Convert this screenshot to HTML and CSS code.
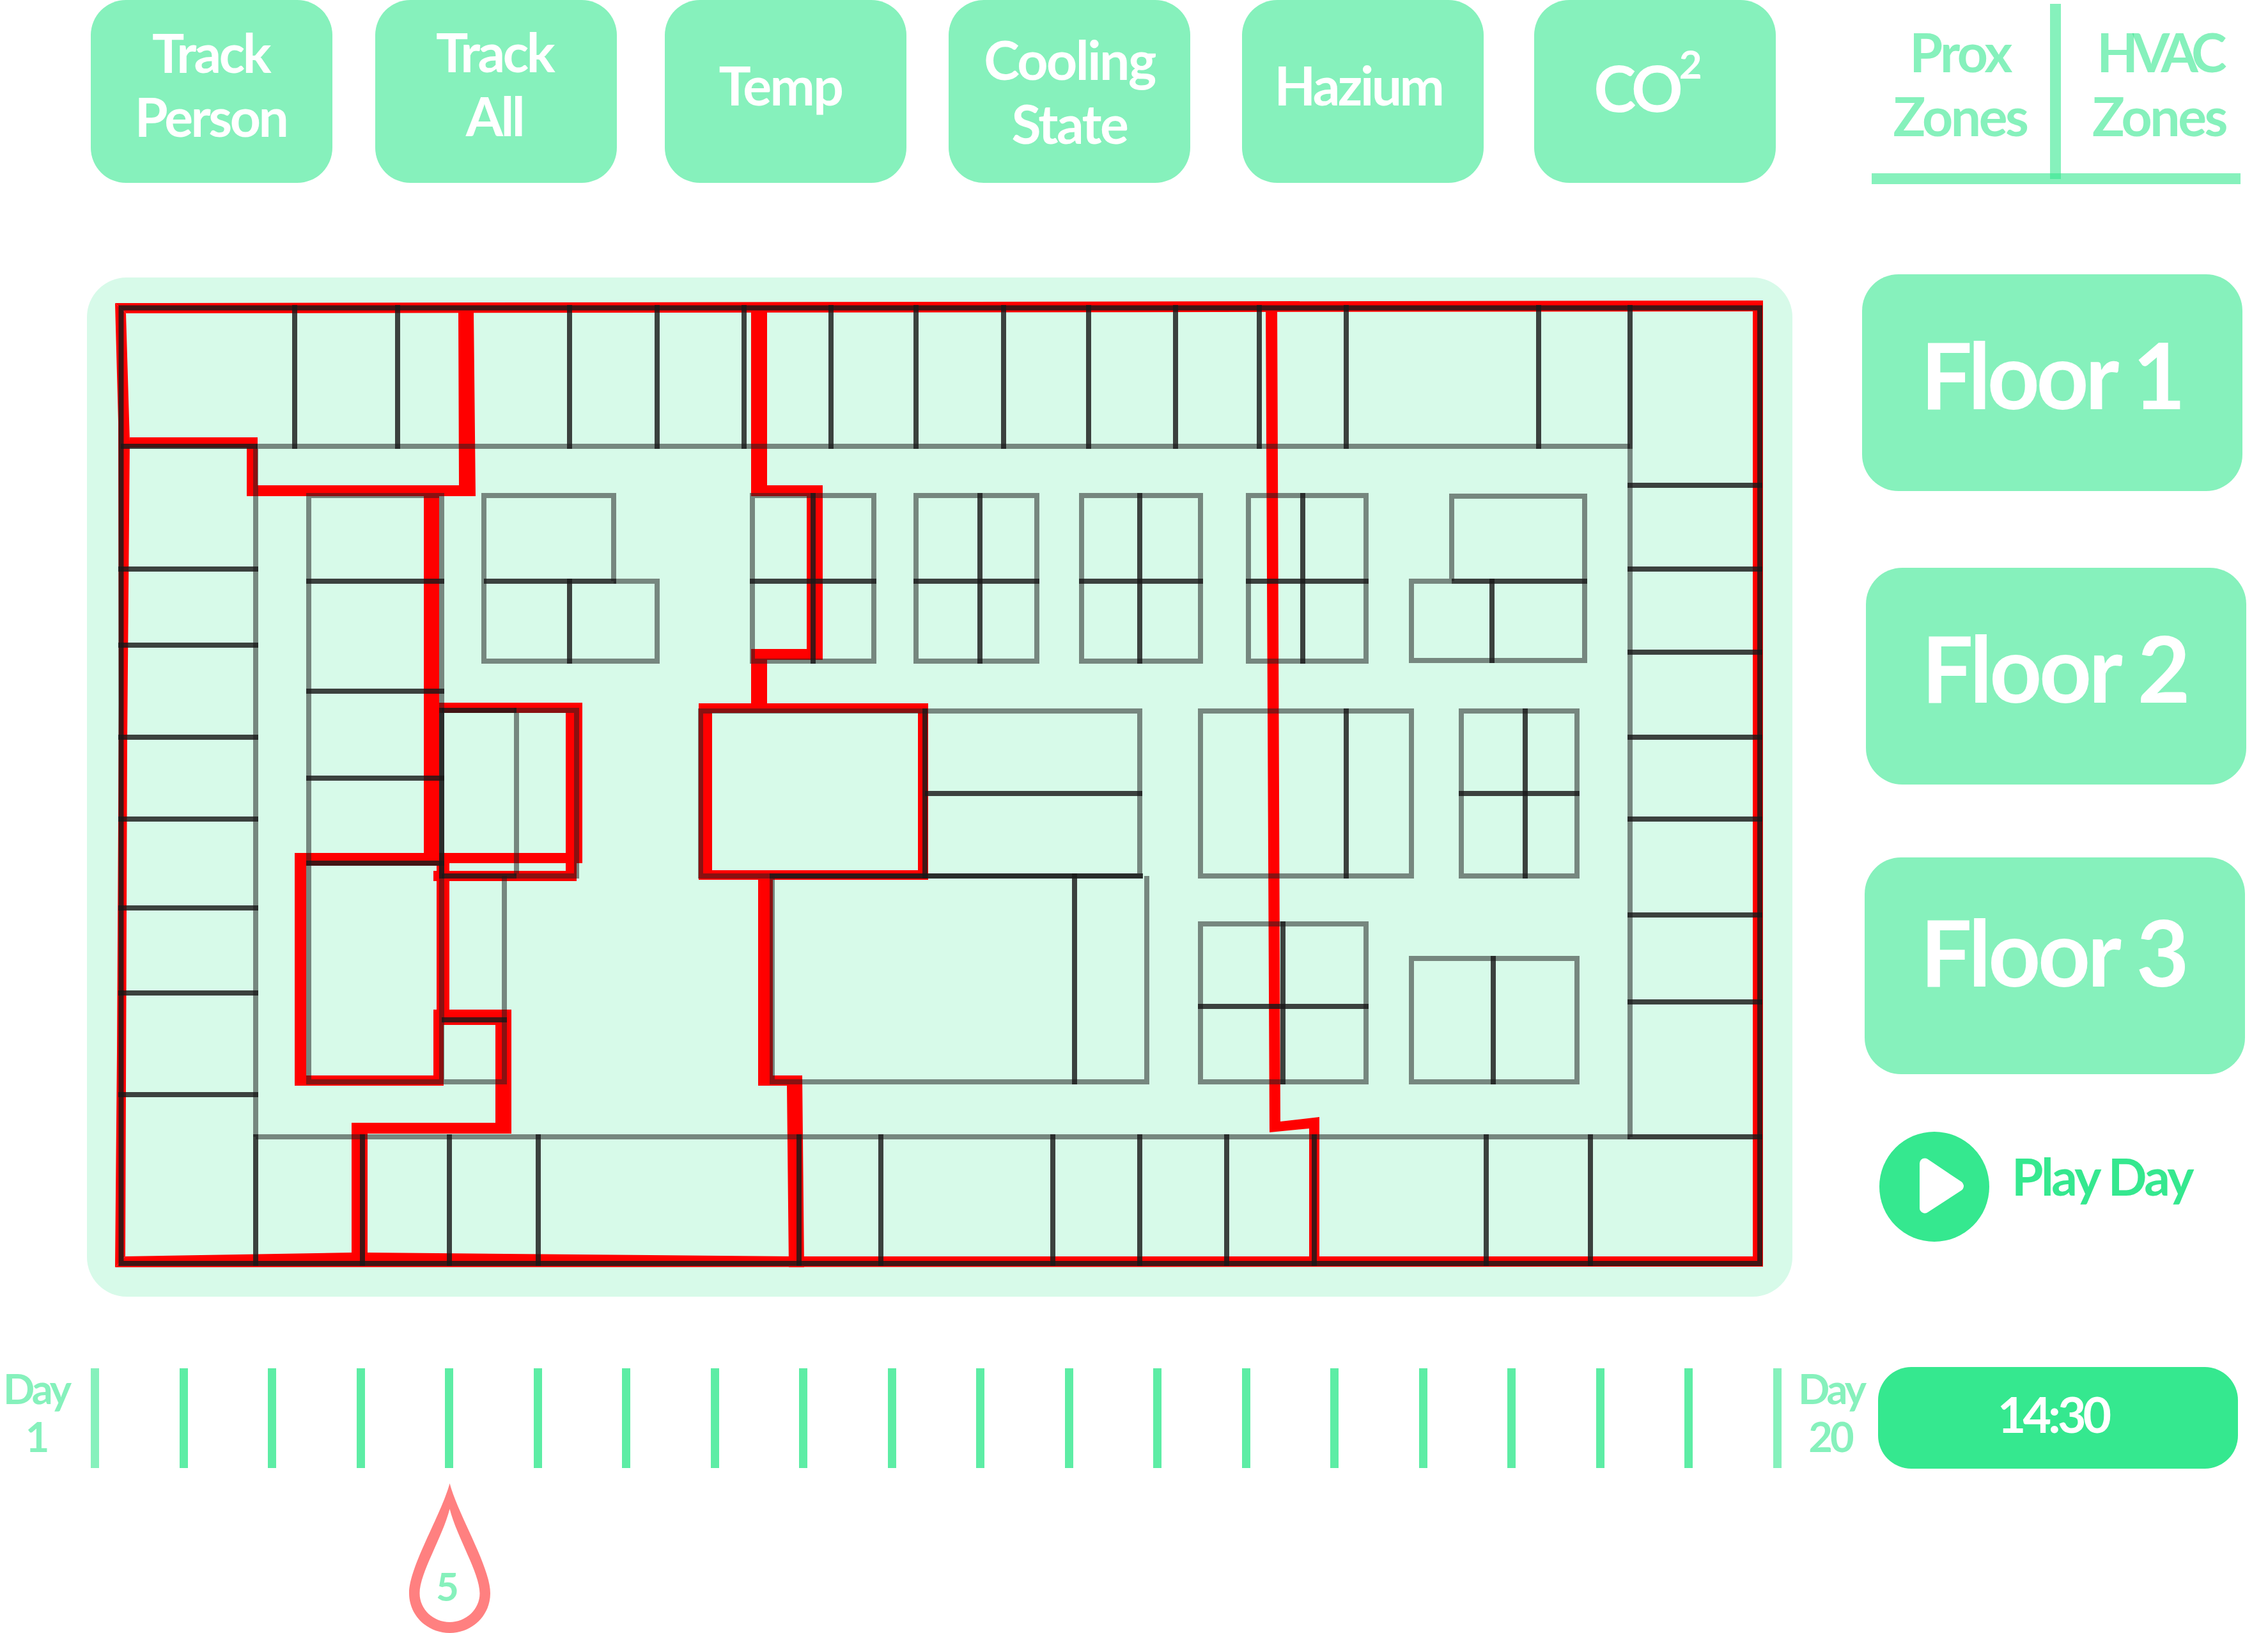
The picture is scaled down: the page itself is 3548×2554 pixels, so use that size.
FILE: index.html
```html
<!DOCTYPE html>
<html lang="en">
<head>
	<meta charset="utf-8">
	<title>Building Monitor</title>
	<link rel="stylesheet" href="styles.css">
</head>
<body>
	<div class="top">
		<div class="btn btn-person"><span>Track<br>Person</span></div>
		<div class="btn btn-all"><span>Track<br>All</span></div>
		<div class="btn btn-temp"><span>Temp</span></div>
		<div class="btn btn-cooling"><span>Cooling<br>State</span></div>
		<div class="btn btn-hazium"><span>Hazium</span></div>
		<div class="btn btn-co2"><span>CO<sup class="sup">2</sup></span></div>
		<div class="tabs">
			<div class="tab"><span>Prox<br>Zones</span></div>
			<div class="tab-divider"></div>
			<div class="tab tab-right"><span><span class="tab-tight">HVAC</span><br>Zones</span></div>
		</div>
	</div>

	<div class="middle">
		<div class="plan">
			<svg class="plan-svg" viewBox="136 434 2668 1594">
				<!-- prox zone outlines -->
				<g class="red">
					<polygon points="180,474 2758,470 2758,487 197,490"/>
					<rect x="2742" y="470" width="16" height="1511"/>
					<polygon points="180,1982 2758,1981 2758,1965 1240,1965 575,1959 550,1959 196,1965"/>
					<polygon points="180,474 185,660 186,1100 183,1645 180,1982 196,1965 199,1160 203,690 197,490"/>
					<polygon points="203,684 403,684 403,759 718,759 717,487 741,487 744,776 386,776 386,700 203,700"/>
					<rect x="663" y="776" width="24" height="574"/>
					<rect x="687" y="1099" width="224" height="16"/>
					<rect x="885" y="1099" width="26" height="251"/>
					<rect x="687" y="1334" width="224" height="16"/>
					<rect x="678" y="1362" width="224" height="16"/>
					<rect x="885" y="1350" width="17" height="12"/>
					<rect x="683" y="1350" width="20" height="229"/>
					<rect x="461" y="1334" width="226" height="20"/>
					<rect x="461" y="1334" width="18" height="364"/>
					<rect x="461" y="1682" width="233" height="16"/>
					<rect x="678" y="1579" width="16" height="119"/>
					<rect x="678" y="1579" width="122" height="24"/>
					<rect x="775" y="1579" width="25" height="194"/>
					<rect x="550" y="1756" width="250" height="17"/>
					<rect x="550" y="1756" width="25" height="203"/>
					<polygon points="1175,473 1200,473 1200,759 1287,759 1287,1032 1200,1032 1200,1100 1175,1100 1175,1015 1262,1015 1262,776 1175,776"/>
					<rect x="1093" y="1100" width="359" height="15"/>
					<rect x="1093" y="1361" width="359" height="15"/>
					<rect x="1093" y="1100" width="21" height="276"/>
					<rect x="1436" y="1100" width="16" height="276"/>
					<polygon points="1186,1376 1209,1376 1209,1682 1255,1682 1258,1982 1234,1982 1231,1698 1186,1698"/>
					<polygon points="1980,472 1998,472 2003,1754 2064,1747 2064,1981 2048,1981 2048,1765 1986,1771"/>
				</g>

				<!-- rooms -->
				<path class="wall" d="M400 698H2550 M400 702V1778 M2550 702V1778 M400 1778H2550
					M483 775H691V1692H483Z M808 1370V1111H902V1370H808 M691 1692H789V1370
					M960 909H1028V1034H757V775H960V909
					M1177 775H1367V1034H1177Z M1433 775H1622V1034H1433Z M1692 775H1878V1034H1692Z M1953 775H2137V1034H1953Z
					M2271 909V776H2479V1033H2208V909H2271
					M1096 1112H1783V1370H1096Z M1208 1370V1692H1794V1370
					M1878 1112H2208V1370H1878Z M2286 1112H2467V1370H2286Z
					M1878 1445H2137V1692H1878Z M2208 1499H2467V1692H2208Z"/>

				<!-- partitions, vertical and horizontal drawn apart so the crossings go darker -->
				<path class="partition" d="M189 698H403
					M185 890H404 M185 1009H404 M185 1153H404 M185 1281H404 M185 1420H404 M185 1553H404 M185 1712H404
					M2546 759H2757 M2546 890H2757 M2546 1020H2757 M2546 1153H2757 M2546 1281H2757 M2546 1431H2757 M2546 1567H2757 M2546 1778H2757
					M479 909H695 M479 1081H695 M479 1217H695 M479 1350H695
					M757 909H964 M691 1111H808 M691 1370H808 M691 1595H793
					M1173 909H1371 M1429 909H1626 M1688 909H1882 M1949 909H2141 M2271 909H2483
					M1447 1241H1787 M1204 1370H1788 M2282 1241H2471 M1874 1574H2141"/>
				<path class="partition" d="M461 477V702 M622 477V702 M891 477V702 M1028 477V702 M1164 477V702 M1300 477V702 M1433 477V702 M1570 477V702 M1703 477V702 M1839 477V702 M1970 477V702 M2106 477V702 M2407 477V702 M2550 477V702
					M400 1774V1980 M567 1774V1980 M703 1774V1980 M842 1774V1980 M1250 1774V1980 M1378 1774V1980 M1647 1774V1980 M1783 1774V1980 M1919 1774V1980 M2056 1774V1980 M2325 1774V1980 M2488 1774V1980
					M691 1107V1374
					M891 905V1038 M1272 771V1038 M1533 771V1038 M1783 771V1038 M2038 771V1038 M2334 905V1037
					M1447 1108V1374 M1681 1366V1696 M2106 1108V1374 M2386 1108V1374 M2007 1441V1696 M2336 1495V1696"/>
				<rect class="partition" x="189.5" y="481.5" width="2563.5" height="1494.5"/>
			</svg>
		</div>
		<div class="side">
			<div class="floor floor-one">Floor 1</div>
			<div class="floor floor-two">Floor 2</div>
			<div class="floor floor-three">Floor 3</div>
			<div class="play">
				<svg class="play-icon" viewBox="0 0 172 172">
					<circle cx="86" cy="86" r="86" fill="#35e88f"/>
					<polygon points="71,49.5 124,85 71,119.5" fill="#fff" stroke="#fff" stroke-width="16" stroke-linejoin="round"/>
				</svg>
				<span class="play-label">Play Day</span>
			</div>
		</div>
	</div>

	<div class="bottom">
		<div class="day day-first">Day<br>1</div>
		<div class="ticks">
			<i class="tick tick-end"></i>
			<i class="tick"></i>
			<i class="tick"></i>
			<i class="tick"></i>
			<i class="tick"></i>
			<i class="tick"></i>
			<i class="tick"></i>
			<i class="tick"></i>
			<i class="tick"></i>
			<i class="tick"></i>
			<i class="tick"></i>
			<i class="tick"></i>
			<i class="tick"></i>
			<i class="tick"></i>
			<i class="tick"></i>
			<i class="tick"></i>
			<i class="tick"></i>
			<i class="tick"></i>
			<i class="tick"></i>
			<i class="tick tick-end"></i>
		</div>
		<div class="day day-last">Day<br>20</div>
		<div class="clock">14:30</div>
	</div>

	<div class="marker">
		<svg class="marker-drop" viewBox="0 0 127 234">
			<path fill="#ff8080" fill-rule="evenodd" d="M63.5 0C50 50 0 130 0 172C0 206 28 234 63.5 234C99 234 127 206 127 172C127 130 77 50 63.5 0Z
				M63.5 40C52 85 16.5 140 16.5 172C16.5 197 38 217 63.5 217C89 217 110.5 197 110.5 172C110.5 140 75 85 63.5 40Z"/>
		</svg>
		<span class="marker-num">5</span>
	</div>
</body>
</html>
```

FILE: styles.css
```css
html, body {
	margin: 0;
	background: #fff;
}
body {
	width: 3548px;
	height: 2554px;
	overflow: hidden;
	font-family: Lato, "Open Sans", sans-serif;
	font-weight: 700;
}

/* top row */
.top {
	display: flex;
	height: 288px;
	padding-left: 142px;
}
.btn {
	display: flex;
	align-items: center;
	justify-content: center;
	box-sizing: border-box;
	width: 378px;
	height: 286px;
	padding-bottom: 20px;
	border-radius: 55px;
	background: rgba(53, 232, 143, 0.6);
	color: #fff;
	font-size: 84px;
	line-height: 100px;
	letter-spacing: -3.5px;
	text-align: center;
}
.btn-person {
	padding-right: 3px;
	padding-bottom: 22px;
}
.btn-all {
	margin-left: 67px;
	padding-bottom: 24px;
	padding-right: 5px;
}
.btn-temp {
	margin-left: 75px;
	padding-right: 16px;
	letter-spacing: -2.5px;
}
.btn-cooling {
	margin-left: 66px;
	padding-bottom: 0;
	letter-spacing: -2.5px;
}
.btn-hazium {
	margin-left: 81px;
	padding-right: 14px;
}
.btn-co2 {
	margin-left: 79px;
	padding-right: 22px;
	padding-bottom: 14px;
	font-size: 100px;
	letter-spacing: -6px;
}
.sup {
	font-size: 62px;
	letter-spacing: 0;
	line-height: 0;
	vertical-align: 52px;
}
.tabs {
	display: flex;
	box-sizing: border-box;
	width: 577px;
	height: 288px;
	margin-left: 150px;
	border-bottom: 17px solid rgba(53, 232, 143, 0.6);
	color: rgba(53, 232, 143, 0.6);
	font-size: 84px;
	line-height: 100px;
	letter-spacing: -3.5px;
	text-align: center;
}
.tab {
	display: flex;
	align-items: center;
	justify-content: center;
	flex: none;
	width: 279px;
	padding-right: 3px;
	padding-bottom: 10px;
	box-sizing: border-box;
}
.tab-right {
	width: 281px;
	padding-right: 0;
	padding-left: 26px;
}
.tab-tight {
	letter-spacing: -9px;
}
.tab-divider {
	flex: none;
	width: 17px;
	height: 274px;
	margin-top: 6px;
	background: rgba(53, 232, 143, 0.6);
}

/* plan and side column */
.middle {
	display: flex;
	height: 1599px;
	margin-top: 141px;
}
.plan {
	flex: none;
	width: 2668px;
	height: 1594px;
	margin: 5px 0 0 136px;
	border-radius: 62px;
	background: rgba(53, 232, 143, 0.2);
}
.plan-svg {
	display: block;
	width: 2668px;
	height: 1594px;
}
.red {
	fill: #f00;
}
.wall {
	fill: none;
	stroke: rgba(32, 32, 32, 0.53);
	stroke-width: 8;
}
.partition {
	fill: none;
	stroke: rgba(24, 24, 24, 0.82);
	stroke-width: 8;
}
.side {
	flex: none;
	width: 744px;
}
.floor {
	display: flex;
	align-items: center;
	justify-content: center;
	box-sizing: border-box;
	width: 595px;
	height: 339px;
	border-radius: 57px;
	background: rgba(53, 232, 143, 0.6);
	color: #fff;
	font-size: 143px;
	letter-spacing: -5.5px;
}
.floor-one {
	margin-left: 109px;
	padding-bottom: 29px;
	padding-right: 3px;
}
.floor-two {
	margin: 120px 0 0 115px;
	padding-bottom: 28px;
	padding-right: 5px;
	letter-spacing: -4.5px;
}
.floor-three {
	margin: 114px 0 0 113px;
	padding-bottom: 47px;
	padding-right: 5px;
	letter-spacing: -4.5px;
}
.play {
	display: flex;
	align-items: center;
	margin: 90px 0 0 136px;
}
.play-icon {
	display: block;
	width: 172px;
	height: 172px;
}
.play-label {
	margin-left: 35px;
	padding-bottom: 34px;
	color: #35e88f;
	font-size: 80px;
	letter-spacing: -3.5px;
}

/* timeline */
.bottom {
	display: flex;
	align-items: flex-start;
	height: 159px;
	margin-top: 110px;
}
.day {
	flex: none;
	margin-top: -4px;
	color: rgba(53, 232, 143, 0.6);
	font-size: 65px;
	line-height: 75px;
	letter-spacing: -4px;
	text-align: center;
}
.day-first {
	width: 113px;
}
.day-last {
	width: 100px;
	margin-left: 26px;
}
.ticks {
	display: flex;
	justify-content: space-between;
	flex: none;
	width: 2645px;
	margin: 2px 0 0 29px;
}
.tick {
	display: block;
	width: 13px;
	height: 156px;
	background: rgba(53, 232, 143, 0.8);
}
.tick-end {
	background: rgba(53, 232, 143, 0.6);
}
.clock {
	flex: none;
	box-sizing: border-box;
	width: 563px;
	height: 159px;
	margin-left: 25px;
	padding-right: 16px;
	border-radius: 52px;
	background: #35e88f;
	color: #fff;
	font-size: 77px;
	line-height: 147px;
	letter-spacing: -5px;
	text-align: center;
}

/* day marker */
.marker {
	position: relative;
	width: 127px;
	height: 234px;
	margin: 23px 0 0 640px;
}
.marker-drop {
	display: block;
	width: 127px;
	height: 234px;
}
.marker-num {
	position: absolute;
	left: 0;
	top: 120px;
	width: 120px;
	color: rgba(53, 232, 143, 0.6);
	font-size: 62px;
	line-height: 80px;
	text-align: center;
}
```
